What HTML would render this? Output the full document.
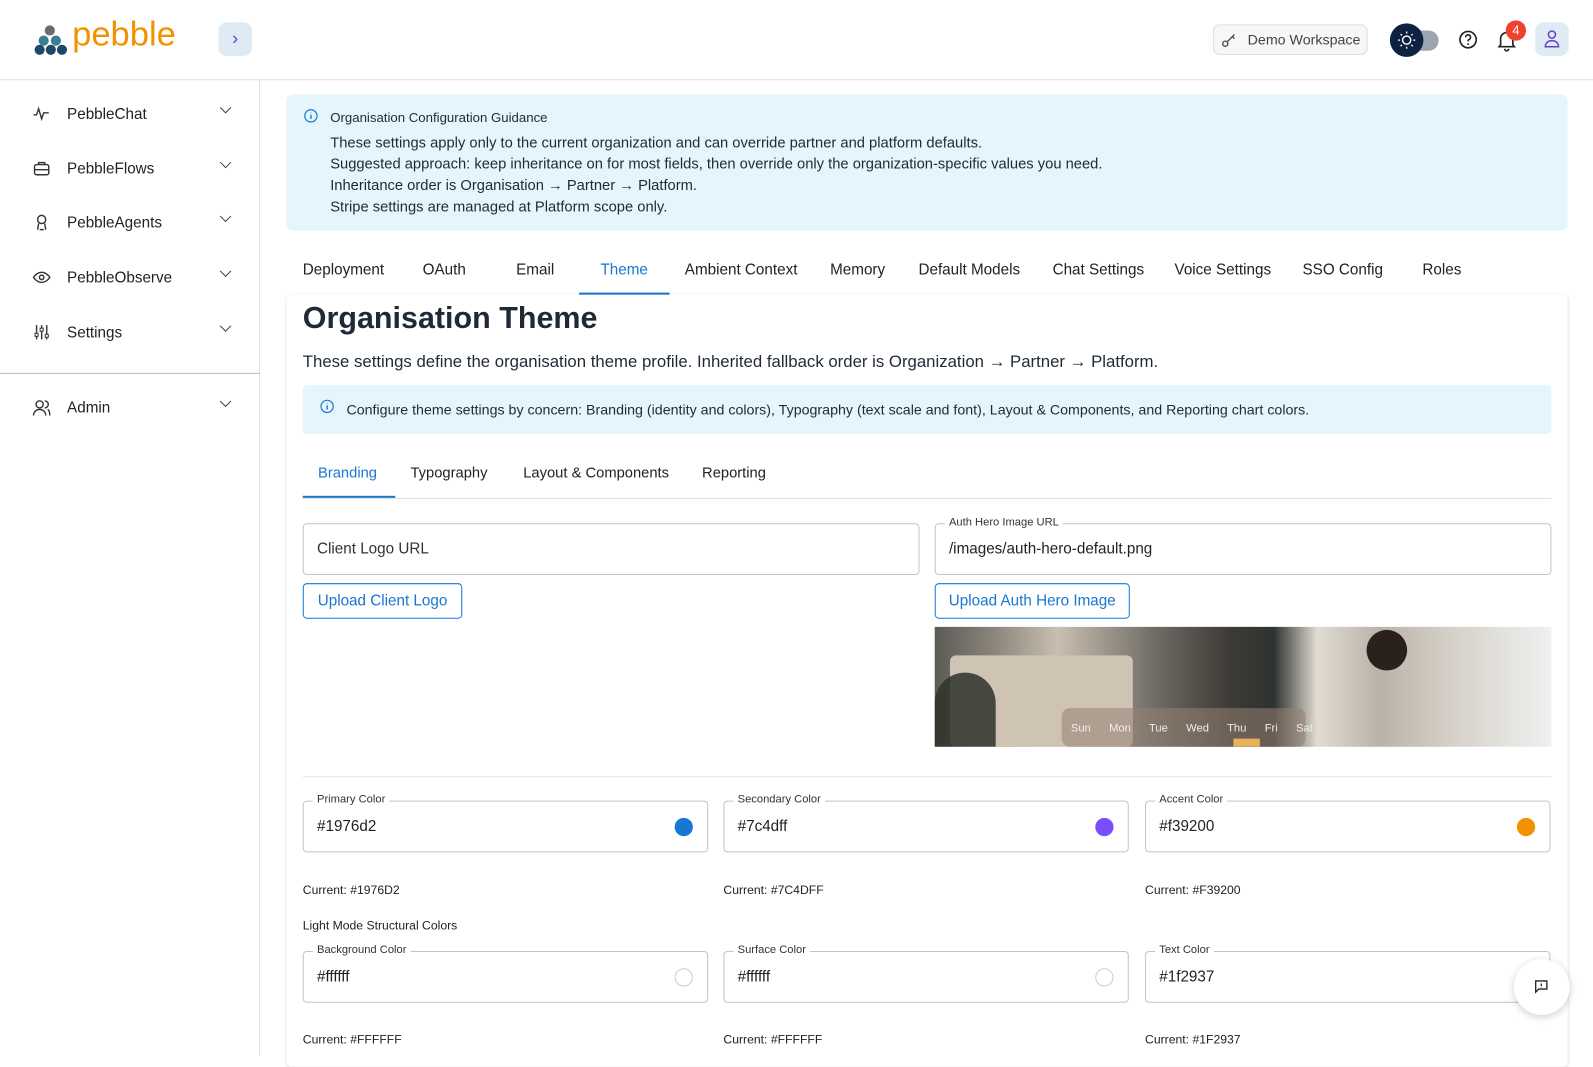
<!DOCTYPE html>
<html><head><meta charset="utf-8"><style>
*{box-sizing:border-box;margin:0;padding:0}
body{width:1593px;height:1039px;overflow:hidden;background:#fff;font-family:"Liberation Sans",sans-serif;color:#1f2937;position:relative}
#w{position:absolute;left:0;top:0;width:1568px;height:1023px;transform:scale(1.0160);transform-origin:0 0}
.abs{position:absolute}
.hdr{left:0;top:0;width:1568px;height:79px;border-bottom:1px solid #e0e0e0}
.side{left:0;top:79px;width:256px;height:960px;border-right:1px solid #e0e0e0}
.nav{position:absolute;left:32px;font-size:15px;color:#222;display:flex;align-items:center}
.nav span{margin-left:16px}
.chev{position:absolute;left:218px;width:8px;height:8px;border-right:1.5px solid #444;border-bottom:1.5px solid #444;transform:rotate(45deg)}
.tab{position:absolute;top:257px;font-size:15px;color:#222}
.field{position:absolute;height:51px;border:1px solid #c4c4c4;border-radius:4px;font-size:15px;padding:0 13px;display:flex;align-items:center;color:#222}
.lbl{position:absolute;top:-8px;left:9px;background:#fff;padding:0 4px;font-size:11px;color:#333}
.dot{position:absolute;right:14px;top:16px;width:18px;height:18px;border-radius:50%}
.small{position:absolute;font-size:12px;color:#222}
.btn{position:absolute;height:35px;border:1px solid #1976d2;border-radius:4px;color:#1976d2;font-size:15px;display:flex;align-items:center;justify-content:center}
</style></head><body><div id="w">
<div class="abs hdr"></div>
<svg class="abs" style="left:34px;top:22px" width="36" height="34" viewBox="0 0 36 34">
<circle cx="15" cy="8" r="5" fill="#6b6b6b"/>
<circle cx="9" cy="18" r="5" fill="#3d7d93"/><circle cx="21" cy="18" r="5" fill="#3d7d93"/>
<circle cx="5" cy="27" r="5" fill="#1b4a66"/><circle cx="16" cy="27" r="5" fill="#1b4a66"/><circle cx="27" cy="27" r="5" fill="#1b4a66"/>
</svg>
<div class="abs" style="left:71px;top:15px;font-size:34px;color:#f39200">pebble</div>
<div class="abs" style="left:215px;top:22px;width:33px;height:33px;border-radius:8px;background:#deebf5;color:#6a3fd0;font-size:18px;text-align:center;line-height:32px">›</div>
<div class="abs" style="left:1194px;top:24px;width:152px;height:30px;border:1px solid #ddd;border-radius:6px;background:#f7f7f7;font-size:14px;color:#444;padding-left:33px;line-height:28px">Demo Workspace</div>
<svg class="abs" style="left:1202px;top:31px" width="16" height="16" viewBox="0 0 16 16"><circle cx="4" cy="12" r="2.5" fill="none" stroke="#444" stroke-width="1.3"/><path d="M6 10L13 3M11 5l2 2" stroke="#444" stroke-width="1.3" fill="none"/></svg>
<div class="abs" style="left:1384px;top:30px;width:32px;height:20px;border-radius:10px;background:#9aa5b1"></div>
<div class="abs" style="left:1368px;top:23px;width:33px;height:33px;border-radius:50%;background:#0d2240"></div>
<svg class="abs" style="left:1375px;top:30px" width="19" height="19" viewBox="0 0 19 19"><circle cx="9.5" cy="9.5" r="4" fill="none" stroke="#fff" stroke-width="1.4"/><path d="M9.5 1v2M9.5 16v2M1 9.5h2M16 9.5h2M3.5 3.5l1.4 1.4M14.1 14.1l1.4 1.4M3.5 15.5l1.4-1.4M14.1 4.9l1.4-1.4" stroke="#fff" stroke-width="1.3"/></svg>
<svg class="abs" style="left:1435px;top:29px" width="20" height="20" viewBox="0 0 20 20"><circle cx="10" cy="10" r="8" fill="none" stroke="#222" stroke-width="1.6"/><path d="M7.6 7.7a2.4 2.4 0 1 1 3.3 2.2c-.6.3-.9.7-.9 1.4v.4" fill="none" stroke="#222" stroke-width="1.6"/><circle cx="10" cy="14.4" r=".9" fill="#222"/></svg>
<svg class="abs" style="left:1473px;top:29px" width="20" height="22" viewBox="0 0 20 22"><path d="M4 15V9a6 6 0 0 1 12 0v6l1.5 2h-15zM8 19a2 2 0 0 0 4 0" fill="none" stroke="#222" stroke-width="1.6"/></svg>
<div class="abs" style="left:1482px;top:20px;width:20px;height:20px;border-radius:50%;background:#f0412f;color:#fff;font-size:13px;text-align:center;line-height:20px">4</div>
<div class="abs" style="left:1511px;top:22px;width:33px;height:33px;border-radius:8px;background:#deebf5"></div>
<svg class="abs" style="left:1518px;top:28px" width="19" height="20" viewBox="0 0 19 20"><circle cx="9.5" cy="6" r="3.5" fill="none" stroke="#6a3fd0" stroke-width="1.5"/><path d="M3 18c0-4 3-6 6.5-6s6.5 2 6.5 6z" fill="none" stroke="#6a3fd0" stroke-width="1.5"/></svg>

<div class="abs side"></div>
<div class="nav" style="top:103px"><svg width="18" height="18" viewBox="0 0 18 18"><path d="M1 10h3l2-6 3 10 2-6h5" fill="none" stroke="#333" stroke-width="1.4"/></svg><span>PebbleChat</span></div><div class="chev" style="top:102px"></div>
<div class="nav" style="top:157px"><svg width="18" height="18" viewBox="0 0 18 18"><rect x="2" y="5" width="14" height="10" rx="2" fill="none" stroke="#333" stroke-width="1.4"/><path d="M6 5V3h6v2M2 10h14" fill="none" stroke="#333" stroke-width="1.4"/></svg><span>PebbleFlows</span></div><div class="chev" style="top:156px"></div>
<div class="nav" style="top:210px"><svg width="18" height="18" viewBox="0 0 18 18"><circle cx="9" cy="6" r="4" fill="none" stroke="#333" stroke-width="1.4"/><path d="M5 16l1-6M13 16l-1-6M7 16h4" fill="none" stroke="#333" stroke-width="1.4"/></svg><span>PebbleAgents</span></div><div class="chev" style="top:209px"></div>
<div class="nav" style="top:264px"><svg width="18" height="18" viewBox="0 0 18 18"><path d="M1 9s3-5 8-5 8 5 8 5-3 5-8 5-8-5-8-5z" fill="none" stroke="#333" stroke-width="1.4"/><circle cx="9" cy="9" r="2.2" fill="none" stroke="#333" stroke-width="1.4"/></svg><span>PebbleObserve</span></div><div class="chev" style="top:263px"></div>
<div class="nav" style="top:318px"><svg width="18" height="18" viewBox="0 0 18 18"><path d="M4 2v14M9 2v14M14 2v14" stroke="#333" stroke-width="1.4"/><rect x="2.5" y="10" width="3" height="3" fill="#fff" stroke="#333"/><rect x="7.5" y="5" width="3" height="3" fill="#fff" stroke="#333"/><rect x="12.5" y="11" width="3" height="3" fill="#fff" stroke="#333"/></svg><span>Settings</span></div><div class="chev" style="top:317px"></div>
<div class="abs" style="left:0;top:367px;width:256px;height:1px;background:#bbb"></div>
<div class="nav" style="top:392px"><svg width="18" height="18" viewBox="0 0 18 18"><circle cx="7" cy="6" r="3.5" fill="none" stroke="#333" stroke-width="1.4"/><path d="M1 17c0-4 3-6 6-6s6 2 6 6M12 2.5a3.5 3.5 0 0 1 0 7M15 11c1.5 1 2 3 2 6" fill="none" stroke="#333" stroke-width="1.4"/></svg><span>Admin</span></div><div class="chev" style="top:391px"></div>

<div class="abs" style="left:282px;top:93px;width:1261px;height:134px;background:#e5f5fc;border-radius:6px"></div>
<svg class="abs" style="left:299px;top:107px" width="14" height="14" viewBox="0 0 14 14"><circle cx="7" cy="7" r="6" fill="none" stroke="#1976d2" stroke-width="1.2"/><path d="M7 6v4M7 4v.5" stroke="#1976d2" stroke-width="1.4"/></svg>
<div class="abs" style="left:325px;top:108px;font-size:13px;color:#1f2937">Organisation Configuration Guidance</div>
<div class="abs" style="left:325px;top:131px;font-size:14.5px;line-height:21px;color:#1f2937">These settings apply only to the current organization and can override partner and platform defaults.<br>Suggested approach: keep inheritance on for most fields, then override only the organization-specific values you need.<br>Inheritance order is Organisation → Partner → Platform.<br>Stripe settings are managed at Platform scope only.</div>

<div class="tab" style="left:298px">Deployment</div>
<div class="tab" style="left:416px">OAuth</div>
<div class="tab" style="left:508px">Email</div>
<div class="tab" style="left:591px;color:#1976d2">Theme</div>
<div class="abs" style="left:570px;top:288px;width:89px;height:2px;background:#1976d2"></div>
<div class="tab" style="left:674px">Ambient Context</div>
<div class="tab" style="left:817px">Memory</div>
<div class="tab" style="left:904px">Default Models</div>
<div class="tab" style="left:1036px">Chat Settings</div>
<div class="tab" style="left:1156px">Voice Settings</div>
<div class="tab" style="left:1282px">SSO Config</div>
<div class="tab" style="left:1400px">Roles</div>

<div class="abs" style="left:282px;top:290px;width:1261px;height:760px;border-radius:4px;box-shadow:0 1px 3px rgba(0,0,0,.15)"></div>
<div class="abs" style="left:298px;top:297px;font-size:30px;font-weight:600;color:#1f2937">Organisation Theme</div>
<div class="abs" style="left:298px;top:347px;font-size:16.5px;color:#1f2937">These settings define the organisation theme profile. Inherited fallback order is Organization → Partner → Platform.</div>
<div class="abs" style="left:298px;top:379px;width:1229px;height:48px;background:#e5f5fc;border-radius:4px"></div>
<svg class="abs" style="left:315px;top:393px" width="14" height="14" viewBox="0 0 14 14"><circle cx="7" cy="7" r="6" fill="none" stroke="#1976d2" stroke-width="1.2"/><path d="M7 6v4M7 4v.5" stroke="#1976d2" stroke-width="1.4"/></svg>
<div class="abs" style="left:341px;top:395px;font-size:14px;color:#1f2937">Configure theme settings by concern: Branding (identity and colors), Typography (text scale and font), Layout &amp; Components, and Reporting chart colors.</div>

<div class="tab" style="left:313px;top:458px;font-size:14.5px;color:#1976d2">Branding</div>
<div class="tab" style="left:404px;top:458px;font-size:14.5px">Typography</div>
<div class="tab" style="left:515px;top:458px;font-size:14.5px">Layout &amp; Components</div>
<div class="tab" style="left:691px;top:458px;font-size:14.5px">Reporting</div>
<div class="abs" style="left:298px;top:490px;width:1229px;height:1px;background:#ddd"></div>
<div class="abs" style="left:298px;top:488px;width:91px;height:2px;background:#1976d2"></div>

<div class="field" style="left:298px;top:515px;width:607px;color:#333">Client Logo URL</div>
<div class="field" style="left:920px;top:515px;width:607px"><div class="lbl">Auth Hero Image URL</div>/images/auth-hero-default.png</div>
<div class="btn" style="left:298px;top:574px;width:157px">Upload Client Logo</div>
<div class="btn" style="left:920px;top:574px;width:192px">Upload Auth Hero Image</div>
<div class="abs" style="left:920px;top:617px;width:607px;height:118px;overflow:hidden;background:linear-gradient(90deg,#5b5a55 0%,#8d877d 10%,#c9bfb1 20%,#6e6a64 36%,#3d3a35 48%,#2f3331 55%,#e1dcd3 62%,#b9b2a7 72%,#d8d3cb 85%,#eef1f0 100%)">
<div class="abs" style="left:15px;top:28px;width:180px;height:90px;background:#cfc3b3;border-radius:6px"></div>
<div class="abs" style="left:0;top:45px;width:60px;height:73px;background:#2e332c;border-radius:30px 30px 0 0;opacity:.85"></div>
<div class="abs" style="left:425px;top:3px;width:40px;height:40px;border-radius:50%;background:#2a211d"></div>
<div class="abs" style="left:125px;top:80px;width:240px;height:38px;background:rgba(150,130,115,.55);border-radius:8px"></div>
<div class="abs" style="left:134px;top:94px;font-size:11px;color:#f3efe9;word-spacing:15px">Sun Mon Tue Wed Thu Fri Sat</div>
<div class="abs" style="left:294px;top:110px;width:26px;height:8px;background:#e8b25a"></div>
</div>

<div class="abs" style="left:298px;top:764px;width:1229px;height:1px;background:#e5e5e5"></div>
<div class="field" style="left:298px;top:788px;width:399px"><div class="lbl">Primary Color</div>#1976d2<div class="dot" style="background:#1976d2"></div></div>
<div class="field" style="left:712px;top:788px;width:399px"><div class="lbl">Secondary Color</div>#7c4dff<div class="dot" style="background:#7c4dff"></div></div>
<div class="field" style="left:1127px;top:788px;width:399px"><div class="lbl">Accent Color</div>#f39200<div class="dot" style="background:#f39200"></div></div>
<div class="small" style="left:298px;top:869px">Current: #1976D2</div>
<div class="small" style="left:712px;top:869px">Current: #7C4DFF</div>
<div class="small" style="left:1127px;top:869px">Current: #F39200</div>
<div class="small" style="left:298px;top:904px">Light Mode Structural Colors</div>
<div class="field" style="left:298px;top:936px;width:399px"><div class="lbl">Background Color</div>#ffffff<div class="dot" style="background:#fff;border:1px solid #ccc"></div></div>
<div class="field" style="left:712px;top:936px;width:399px"><div class="lbl">Surface Color</div>#ffffff<div class="dot" style="background:#fff;border:1px solid #ccc"></div></div>
<div class="field" style="left:1127px;top:936px;width:399px"><div class="lbl">Text Color</div>#1f2937</div>
<div class="small" style="left:298px;top:1016px">Current: #FFFFFF</div>
<div class="small" style="left:712px;top:1016px">Current: #FFFFFF</div>
<div class="small" style="left:1127px;top:1016px">Current: #1F2937</div>
<div class="abs" style="left:1490px;top:944px;width:55px;height:55px;border-radius:50%;background:#fff;box-shadow:0 2px 8px rgba(0,0,0,.2)"></div>
<svg class="abs" style="left:1510px;top:964px" width="14" height="14" viewBox="0 0 14 14"><path d="M1.5 1.5h11v8h-8l-3 3z" fill="none" stroke="#222" stroke-width="1.3"/><path d="M7 4v2.5M7 7.8v.4" stroke="#222" stroke-width="1.3"/></svg>
</div></body></html>
